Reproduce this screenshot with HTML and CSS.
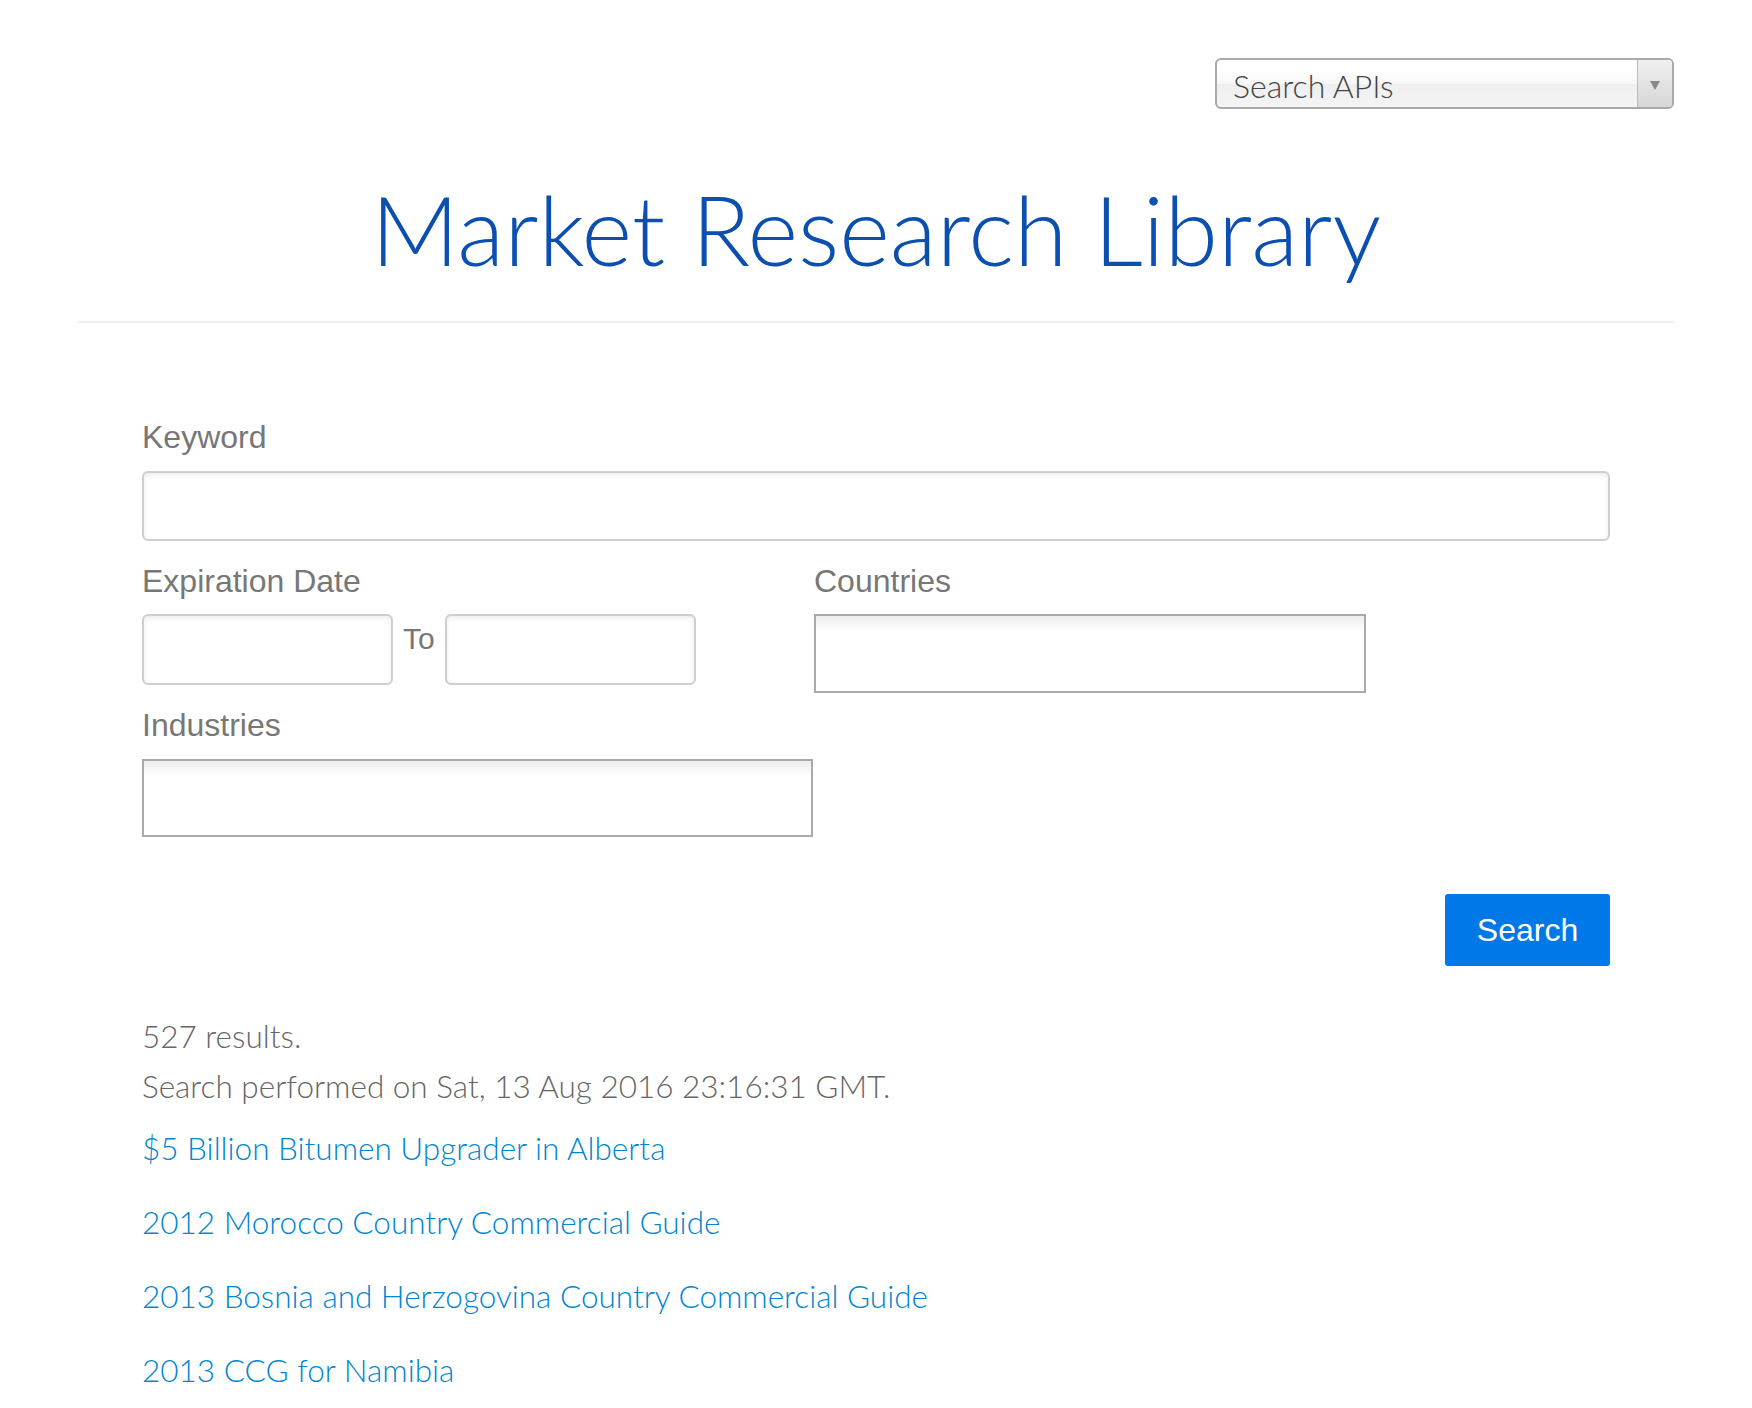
FILE: index.html
```html
<!DOCTYPE html>
<html lang="en">
<head>
<meta charset="utf-8">
<title>Market Research Library</title>
<link rel="stylesheet" href="styles.css">
</head>
<body>
<div class="page">
  <div class="topbar">
    <div class="api-select">
      <span class="api-select-text">Search APIs</span>
      <span class="api-select-arrow"><span class="tri"></span></span>
    </div>
  </div>
  <h1 class="title">Market Research Library</h1>
  <hr class="divider">
  <form class="search-form">
    <label class="field-label">Keyword</label>
    <div class="text-input wide"></div>
    <div class="row">
      <div class="col-left">
        <label class="field-label">Expiration Date</label>
        <div class="date-row">
          <div class="text-input date"></div>
          <span class="to">To</span>
          <div class="text-input date"></div>
        </div>
      </div>
      <div class="col-right">
        <label class="field-label">Countries</label>
        <div class="multi countries"></div>
      </div>
    </div>
    <label class="field-label industries-label">Industries</label>
    <div class="multi industries"></div>
    <div class="actions">
      <button type="button" class="search-btn">Search</button>
    </div>
    <div class="results">
      <p class="meta">527 results.</p>
      <p class="meta">Search performed on Sat, 13 Aug 2016 23:16:31 GMT.</p>
      <a class="result-link" href="#">$5 Billion Bitumen Upgrader in Alberta</a>
      <a class="result-link" href="#">2012 Morocco Country Commercial Guide</a>
      <a class="result-link" href="#">2013 Bosnia and Herzogovina Country Commercial Guide</a>
      <a class="result-link" href="#">2013 CCG for Namibia</a>
    </div>
  </form>
</div>
</body>
</html>
```

FILE: styles.css
```css
* { box-sizing: border-box; }

html, body {
  margin: 0;
  padding: 0;
  background: #fff;
}

body {
  font-family: Lato, "Liberation Sans", sans-serif;
  overflow: hidden;
}

.page {
  width: 1596px;
  margin: 0 auto;
}

.topbar {
  display: flex;
  justify-content: flex-end;
  padding-top: 58px;
}

.api-select {
  width: 459px;
  height: 51px;
  border: 2px solid #aaa;
  border-radius: 6px;
  background: linear-gradient(#ffffff 20%, #f7f7f7 50%, #efefef 52%, #f4f4f4 100%);
  display: flex;
  align-items: center;
  overflow: hidden;
}

.api-select-text {
  flex: 1;
  padding-left: 16px;
  padding-top: 4px;
  font-family: Lato, sans-serif;
  font-weight: 300;
  font-size: 32px;
  line-height: 43px;
  color: #444;
}

.api-select-arrow {
  width: 35px;
  height: 100%;
  border-left: 1px solid #bbb;
  background: linear-gradient(#f0f0f0, #d6d6d6);
  display: flex;
  align-items: center;
  justify-content: center;
  padding-top: 3px;
}

.tri {
  width: 0;
  height: 0;
  border-left: 5px solid transparent;
  border-right: 5px solid transparent;
  border-top: 9px solid #888;
}

.title {
  margin: 60px 0 0;
  text-align: center;
  font-family: Lato, sans-serif;
  font-weight: 300;
  font-size: 97px;
  line-height: 120px;
  color: #0b4fb0;
}

.divider {
  margin: 32px 0 0;
  border: 0;
  height: 2px;
  background: #eee;
}

.search-form {
  padding: 0 64px;
  margin-top: 94px;
}

.field-label {
  display: block;
  font-family: "Liberation Sans", Arial, sans-serif;
  font-size: 32px;
  line-height: 40px;
  color: #777;
}

.text-input {
  border: 2px solid #cfcfcf;
  border-radius: 6px;
  background: #fff;
  box-shadow: inset 0 2px 5px rgba(0,0,0,0.08);
}

.wide {
  height: 70px;
  margin: 14px 0 20px;
}

.row {
  display: flex;
}

.col-left {
  width: 672px;
}

.col-right {
  width: 552px;
}

.date-row {
  display: flex;
  align-items: flex-start;
  margin-top: 13px;
}

.date {
  width: 251px;
  height: 71px;
}

.to {
  margin: 10px 10px 0 10px;
  font-family: "Liberation Sans", Arial, sans-serif;
  font-size: 30px;
  line-height: 30px;
  color: #777;
}

.multi {
  border: 2px solid #aaa;
  background: linear-gradient(#eeeeee 1%, #ffffff 20%);
}

.countries {
  margin-top: 13px;
  height: 79px;
}

.industries-label {
  margin-top: 12px;
}

.industries {
  width: 671px;
  height: 78px;
  margin-top: 14px;
}

.actions {
  display: flex;
  justify-content: flex-end;
  margin-top: 57px;
}

.search-btn {
  width: 165px;
  height: 72px;
  border: 0;
  border-radius: 3px;
  background: #0078e7;
  color: #fff;
  font-family: "Liberation Sans", Arial, sans-serif;
  font-size: 32px;
  padding: 0;
}

.results {
  margin-top: 45px;
}

.meta {
  margin: 0;
  font-family: Lato, sans-serif;
  font-weight: 300;
  font-size: 31.5px;
  line-height: 50px;
  color: #666;
}

.result-link {
  display: block;
  font-family: Lato, sans-serif;
  font-weight: 300;
  font-size: 31.5px;
  line-height: 74px;
  color: #0086cf;
  text-decoration: none;
}
```
